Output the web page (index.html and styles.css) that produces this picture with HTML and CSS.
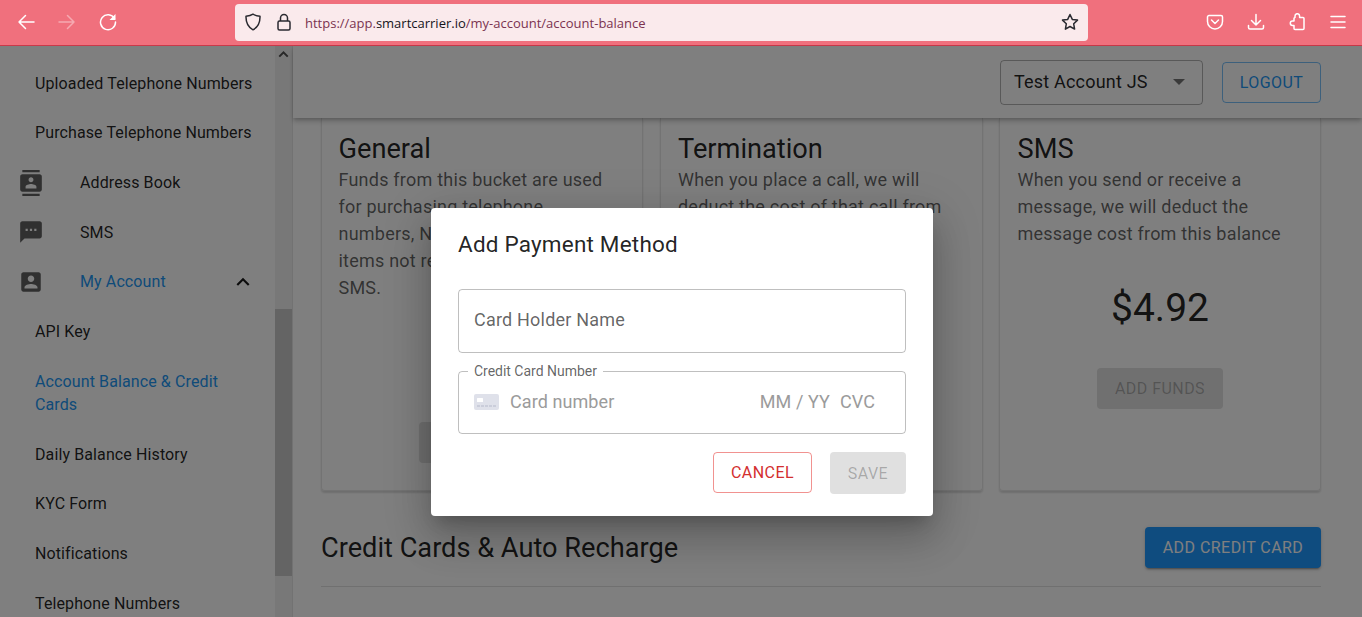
FILE: index.html
```html
<!DOCTYPE html>
<html lang="en">
<head>
<meta charset="utf-8">
<title>Account Balance</title>
<link rel="stylesheet" href="styles.css">
</head>
<body>
<header class="chrome">
  <div class="nav-group">
    <svg class="chrome-icon" viewBox="0 0 18 18"><path d="M17 9H2M8.500 2.500 2 9l6.500 6.500"/></svg>
    <svg class="chrome-icon dim" viewBox="0 0 18 18"><path d="M1 9h15M9.500 2.500 16 9l-6.500 6.500"/></svg>
    <svg class="chrome-icon" viewBox="0 0 18 18"><path d="M15.500 5.500A7.500 7.500 0 1 0 16.500 9"/><path class="solid" d="M16.500 1v6h-6z"/></svg>
  </div>
  <div class="urlbar">
    <svg class="url-icon shield" viewBox="0 0 18 18"><path d="M9 1.200c2 1.300 4.500 1.800 7 2 .2 6-1.800 10.800-7 13.600C3.800 14 1.800 9.200 2 3.200c2.500-.2 5-.7 7-2z"/></svg>
    <svg class="url-icon lock" viewBox="0 0 16 18"><path d="M4.500 8V5a3.500 3.500 0 0 1 7 0v3"/><rect x="2" y="8" width="12" height="9" rx="1.500"/></svg>
    <div class="url"><span>https://app.</span><b>smartcarrier.io</b><span>/my-account/account-balance</span></div>
    <svg class="url-icon star" viewBox="0 0 18 18"><path d="m9 1.500 2.300 4.900 5.200.7-3.800 3.700.9 5.300L9 13.500l-4.600 2.600.9-5.300L1.500 7.100l5.200-.7z"/></svg>
  </div>
  <div class="tools">
    <svg class="chrome-icon" viewBox="0 0 18 18"><path d="M3 2.500h12a1.500 1.500 0 0 1 1.500 1.500v4.500a7.500 7.500 0 0 1-15 0V4A1.500 1.500 0 0 1 3 2.500z"/><path d="m5.500 7 3.500 3.500L12.500 7"/></svg>
    <svg class="chrome-icon" viewBox="0 0 18 18"><path d="M9 1.500v10M4.500 7.500 9 12l4.500-4.500M1.500 12.500v2a1.500 1.500 0 0 0 1.500 1.500h12a1.500 1.500 0 0 0 1.500-1.500v-2"/></svg>
    <svg class="chrome-icon" viewBox="0 0 18 18"><path d="M7 5V3.500a2.300 2.300 0 0 1 4.600 0V5H15a1 1 0 0 1 1 1v10a1 1 0 0 1-1 1H7a1 1 0 0 1-1-1v-3H4.500a2.200 2.200 0 0 1 0-4.400H6V6a1 1 0 0 1 1-1z" transform="translate(0 -.5)"/></svg>
    <svg class="chrome-icon" viewBox="0 0 18 18"><path d="M2 3.500h14M2 9h14M2 14.500h14"/></svg>
  </div>
</header>

<div class="app">
  <aside class="sidebar">
    <nav class="side-list">
      <a class="side-item sub">Uploaded Telephone Numbers</a>
      <a class="side-item sub">Purchase Telephone Numbers</a>
      <a class="side-item">
        <svg class="side-icon" viewBox="0 0 24 24"><path d="M20 0H4v2h16V0zM4 24h16v-2H4v2zM20 4H4c-1.100 0-2 .9-2 2v12c0 1.100.9 2 2 2h16c1.100 0 2-.9 2-2V6c0-1.100-.9-2-2-2zm-8 2.750c1.240 0 2.250 1.010 2.250 2.250s-1.010 2.250-2.250 2.250S9.750 10.240 9.750 9 10.760 6.750 12 6.750zM17 17H7v-1.500c0-1.670 3.330-2.500 5-2.500s5 .83 5 2.500V17z"/></svg>
        Address Book
      </a>
      <a class="side-item">
        <svg class="side-icon" viewBox="0 0 24 24"><path d="M20 2H4c-1.100 0-1.990.9-1.990 2L2 22l4-4h14c1.100 0 2-.9 2-2V4c0-1.100-.9-2-2-2zM9 11H7V9h2v2zm4 0h-2V9h2v2zm4 0h-2V9h2v2z"/></svg>
        SMS
      </a>
      <a class="side-item active">
        <svg class="side-icon" viewBox="0 0 24 24"><path d="M3 5v14c0 1.100.89 2 2 2h14c1.100 0 2-.9 2-2V5c0-1.100-.9-2-2-2H5c-1.110 0-2 .9-2 2zm12 4c0 1.660-1.340 3-3 3s-3-1.340-3-3 1.340-3 3-3 3 1.340 3 3zm-9 8c0-2 4-3.100 6-3.100s6 1.100 6 3.100v1H6v-1z"/></svg>
        My Account
        <svg class="chevron" viewBox="0 0 24 24"><path d="M12 8l-6 6 1.410 1.410L12 10.830l4.590 4.580L18 14z"/></svg>
      </a>
      <a class="side-item sub">API Key</a>
      <a class="side-item sub active tall">Account Balance &amp; Credit Cards</a>
      <a class="side-item sub">Daily Balance History</a>
      <a class="side-item sub">KYC Form</a>
      <a class="side-item sub">Notifications</a>
      <a class="side-item sub">Telephone Numbers</a>
    </nav>
    <div class="scrollbar">
      <svg class="scroll-arrow" viewBox="0 0 24 24"><path d="M12 7l-7 7 2 2 5-5 5 5 2-2z"/></svg>
      <div class="scroll-thumb"></div>
    </div>
  </aside>

  <main class="main">
    <div class="topbar">
      <div class="account-select">
        <span>Test Account JS</span>
        <i class="caret"></i>
      </div>
      <button class="btn outlined-blue">LOGOUT</button>
    </div>
    <div class="content">
      <section class="cards">
        <article class="card">
          <h2>General</h2>
          <p>Funds from this bucket are used for purchasing telephone numbers, NXX fees, and other items not related to voice or<br>SMS.</p>
          <div class="amount">$5.00</div>
          <button class="btn funds">ADD FUNDS</button>
        </article>
        <article class="card">
          <h2>Termination</h2>
          <p>When you place a call, we will deduct the cost of that call from this balance</p>
          <div class="amount">$5.00</div>
          <button class="btn funds">ADD FUNDS</button>
        </article>
        <article class="card">
          <h2>SMS</h2>
          <p>When you send or receive a message, we will deduct the message cost from this balance</p>
          <div class="amount">$4.92</div>
          <button class="btn funds">ADD FUNDS</button>
        </article>
      </section>
      <section class="section-head">
        <h2>Credit Cards &amp; Auto Recharge</h2>
        <button class="btn primary">ADD CREDIT CARD</button>
      </section>
      <hr class="rule">
    </div>
  </main>

  <div class="backdrop">
    <div class="dialog">
      <h3>Add Payment Method</h3>
      <div class="field">Card Holder Name</div>
      <fieldset class="card-field">
        <legend>Credit Card Number</legend>
        <svg class="card-glyph" viewBox="0 0 25 16">
          <rect width="25" height="16" rx="2" fill="#dfe1ea"/>
          <rect x="3" y="4" width="6" height="4" rx=".5" fill="#fff"/>
          <path d="M3 12h19" stroke="#b6bac9" stroke-width="1.200" stroke-dasharray="3 1"/>
        </svg>
        <span class="ph ph-number">Card number</span>
        <span class="ph">MM / YY</span>
        <span class="ph ph-cvc">CVC</span>
      </fieldset>
      <div class="actions">
        <button class="btn cancel">CANCEL</button>
        <button class="btn save">SAVE</button>
      </div>
    </div>
  </div>
</div>
</body>
</html>
```
FILE: styles.css
```css
* { box-sizing: border-box; }
html, body { height: 100%; }
body {
  margin: 0;
  height: 617px;
  overflow: hidden;
  display: flex;
  flex-direction: column;
  background: #fff;
  font-family: Roboto, "Liberation Sans", sans-serif;
  color: rgba(0,0,0,.87);
}
.chrome {
  height: 46px;
  flex: none;
  display: flex;
  align-items: center;
  background: #f0707d;
  border-bottom: 1px solid #c93a4a;
  padding: 0 15px 1px 17px;
}
.chrome-icon {
  width: 18px;
  height: 18px;
  fill: none;
  stroke: #fff;
  stroke-width: 1.500;
  stroke-linecap: round;
  stroke-linejoin: round;
  flex: none;
}
.chrome-icon.dim { opacity: .4; }
.chrome-icon .solid { fill: #fff; stroke: none; }
.nav-group { display: flex; gap: 23px; width: 218px; flex: none; }
.urlbar {
  width: 853px;
  height: 37px;
  flex: none;
  display: flex;
  align-items: center;
  background: #faeaec;
  border-radius: 4px;
  padding: 0 9px;
}
.url-icon {
  width: 18px;
  height: 18px;
  flex: none;
  fill: none;
  stroke: #2a2a30;
  stroke-width: 1.500;
  stroke-linejoin: round;
}
.shield { margin-right: 13px; }
.lock { margin-right: 12px; }
.url {
  flex: 1;
  font-family: "Open Sans", sans-serif;
  font-size: 13px;
  line-height: 20px;
  padding-top: 1px;
  color: #7b3350;
  white-space: nowrap;
}
.url b { font-weight: 400; color: #15141a; }
.tools { display: flex; gap: 23px; margin-left: auto; }

.app { flex: 1; display: flex; min-height: 0; position: relative; }

.sidebar {
  width: 293px;
  flex: none;
  display: flex;
  border-right: 1px solid #e4e4e4;
  overflow: hidden;
}
.side-list { flex: 1; padding-top: 12.300px; min-width: 0; }
.side-item {
  height: 49.700px;
  display: flex;
  align-items: center;
  padding-left: 80px;
  font-size: 16px;
  letter-spacing: .11px;
  position: relative;
  color: rgba(0,0,0,.87);
}
.side-item.sub { padding-left: 35px; }
.side-item.active { color: #2196f3; }
.side-item.tall { height: 73px; line-height: 23px; padding-right: 40px; }
.side-icon {
  position: absolute;
  left: 18px;
  width: 26px;
  height: 26px;
  fill: rgba(0,0,0,.62);
}
.chevron {
  position: absolute;
  right: 19px;
  width: 26px;
  height: 26px;
  fill: rgba(0,0,0,.9);
}
.scrollbar {
  width: 17px;
  flex: none;
  background: #f1f1f1;
  display: flex;
  flex-direction: column;
}
.scroll-arrow { width: 17px; height: 17px; fill: #505050; flex: none; }
.scroll-thumb { width: 17px; height: 267px; margin-top: 246px; background: #c8c8c8; }

.main { flex: 1; min-width: 0; display: flex; flex-direction: column; background: #fff; }
.topbar {
  height: 72px;
  flex: none;
  display: flex;
  align-items: center;
  justify-content: flex-end;
  padding: 0 41px 0 0;
  gap: 19px;
  box-shadow: 0 2px 4px -1px rgba(0,0,0,.2), 0 4px 5px rgba(0,0,0,.14);
  position: relative;
}
.account-select {
  width: 203px;
  height: 45px;
  border: 1px solid rgba(0,0,0,.3);
  border-radius: 4px;
  padding: 0 17px 2px 13px;
  display: flex;
  align-items: center;
  justify-content: space-between;
  font-size: 18px;
  letter-spacing: .2px;
}
.caret {
  width: 0;
  height: 0;
  margin-top: 2px;
  border: 6px solid transparent;
  border-top-color: rgba(0,0,0,.54);
  border-bottom: 0;
}
.btn {
  font-family: inherit;
  font-size: 16px;
  letter-spacing: .45px;
  font-weight: 400;
  border-radius: 4px;
  border: 0;
  background: none;
  padding: 0;
}
.outlined-blue {
  width: 99px;
  height: 41px;
  color: #2196f3;
  border: 1px solid rgba(33,150,243,.6);
}
.content { flex: 1; padding: 0 41px 0 28px; min-height: 0; }
.cards {
  display: grid;
  grid-template-columns: 322px 323px 322px;
  column-gap: 16.500px;
}
.card {
  height: 373px;
  border: 1px solid #e6e6e6;
  border-top: 0;
  border-radius: 0 0 4px 4px;
  box-shadow: 0 2px 2px rgba(0,0,0,.14);
  padding: 14px 17.500px 0;
  display: flex;
  flex-direction: column;
  align-items: center;
}
.card:first-child { padding-left: 16.500px; }
.card h2 {
  width: 100%;
  margin: 0;
  font-size: 27.200px;
  line-height: 34px;
  font-weight: 400;
}
.card p {
  width: 100%;
  padding-right: 6px;
  margin: 0;
  font-size: 18px;
  line-height: 27px;
  letter-spacing: .22px;
  color: rgba(0,0,0,.62);
}
.amount {
  font-size: 39px;
  line-height: 44px;
  margin-top: 39px;
}
.funds {
  width: 126px;
  height: 41px;
  flex: none;
  margin-top: 38px;
  background: #e0e0e0;
  color: rgba(0,0,0,.26);
}
.section-head {
  display: flex;
  justify-content: space-between;
  align-items: center;
  margin-top: 36px;
  height: 41px;
}
.section-head h2 {
  margin: 0;
  font-size: 27.200px;
  font-weight: 400;
}
.primary {
  width: 176px;
  height: 41px;
  background: #1e98ff;
  color: #fff;
  box-shadow: 0 3px 1px -2px rgba(0,0,0,.2), 0 2px 2px rgba(0,0,0,.14), 0 1px 5px rgba(0,0,0,.12);
}
.rule { border: 0; border-top: 1px solid #e0e0e0; margin: 18px 0 0; }

.backdrop {
  position: absolute;
  inset: 0;
  background: rgba(0,0,0,.5);
  display: flex;
  align-items: flex-start;
  padding: 162px 0 0 431px;
}
.dialog {
  width: 502px;
  height: 308px;
  background: #fff;
  border-radius: 4px;
  padding: 0 27px;
  box-shadow: 0 11px 15px -7px rgba(0,0,0,.2), 0 24px 38px 3px rgba(0,0,0,.14), 0 9px 46px 8px rgba(0,0,0,.12);
}
.dialog h3 {
  margin: 0;
  padding-top: 22px;
  height: 81px;
  font-size: 22.500px;
  line-height: 29px;
  font-weight: 400;
  letter-spacing: .2px;
}
.field {
  height: 64px;
  border: 1px solid rgba(0,0,0,.25);
  border-radius: 4px;
  display: flex;
  align-items: center;
  padding: 0 0 3px 15px;
  font-size: 18px;
  letter-spacing: .2px;
  color: rgba(0,0,0,.62);
}
.card-field {
  margin: 10px 0 0;
  height: 71px;
  min-width: 0;
  border: 1px solid rgba(0,0,0,.25);
  border-radius: 4px;
  padding: 0 15px 9px;
  display: flex;
  align-items: center;
}
.card-field legend {
  padding: 0 6px;
  margin-left: -6px;
  font-size: 14px;
  line-height: 16px;
  letter-spacing: -.02px;
  color: rgba(0,0,0,.62);
}
.card-glyph { width: 25px; height: 16px; flex: none; }
.ph { font-size: 18px; letter-spacing: .08px; color: #9b9b9b; }
.ph-number { margin: 0 auto 0 11px; }
.ph-cvc { margin: 0 15px 0 10px; }
.actions { display: flex; justify-content: flex-end; gap: 18px; margin-top: 18px; }
.cancel {
  width: 99px;
  height: 41px;
  color: #d32f2f;
  border: 1px solid rgba(229,57,53,.55);
}
.save {
  width: 76px;
  height: 42px;
  background: #e0e0e0;
  color: rgba(0,0,0,.26);
}
```
